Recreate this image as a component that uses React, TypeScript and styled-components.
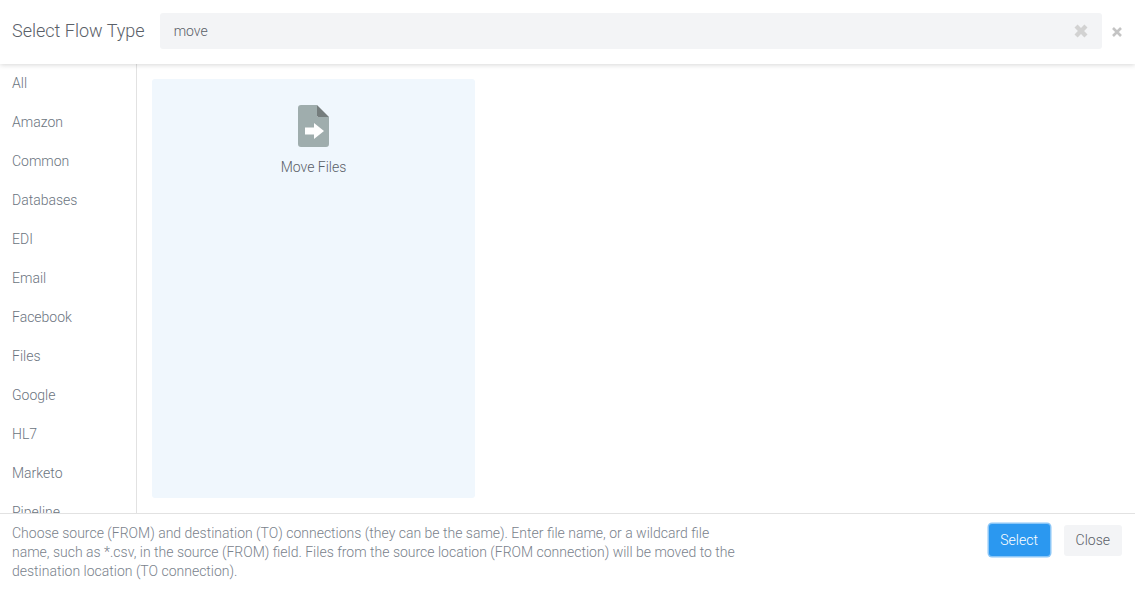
import React from "react";
import styled, { createGlobalStyle } from "styled-components";

const GlobalStyle = createGlobalStyle`
    html, body {
        margin: 0;
        padding: 0;
        background: #fff;
        font-family: Roboto, "Liberation Sans", sans-serif;
        font-weight: 300;
    }
`;

const Modal = styled.div`
    width: 1135px;
    height: 589px;
    display: flex;
    flex-direction: column;
    overflow: hidden;
    background: #fff;
`;

const Header = styled.header`
    height: 64px;
    flex: none;
    display: flex;
    align-items: center;
    padding: 0 13px 2px 12px;
    box-sizing: border-box;
    box-shadow: 0 1px 5px rgba(0, 0, 0, 0.16);
    position: relative;
    z-index: 1;
`;

const Title = styled.h4`
    margin: 0 15px 2px 0;
    font-size: 18px;
    font-weight: 300;
    color: #5a6068;
    white-space: nowrap;
`;

const SearchBox = styled.div`
    flex: 1;
    height: 36px;
    display: flex;
    align-items: center;
    justify-content: space-between;
    padding: 0 14px;
    box-sizing: border-box;
    border-radius: 3px;
    background: #f3f4f6;
`;

const SearchText = styled.span`
    font-size: 14px;
    color: #5a6068;
`;

const ClearIcon = styled.svg`
    width: 14px;
    height: 14px;
    fill: #d2d2d2;
`;

const DismissIcon = styled.svg`
    width: 10px;
    height: 10px;
    margin-left: 10px;
    margin-top: 2px;
    stroke: #c4c4c4;
    stroke-width: 2.6;
`;

const Body = styled.div`
    flex: 1;
    min-height: 0;
    display: flex;
`;

const Sidebar = styled.ul`
    width: 137px;
    flex: none;
    box-sizing: border-box;
    margin: 0;
    padding: 0 0 0 12px;
    list-style: none;
    overflow: hidden;
    border-right: 1px solid #e2e2e2;
`;

const SidebarItem = styled.li`
    height: 39px;
    line-height: 39px;
    font-size: 14px;
    color: #6b7480;
`;

const Content = styled.main`
    flex: 1;
    padding: 15px;
`;

const FlowCard = styled.div`
    width: 323px;
    height: 419px;
    display: flex;
    flex-direction: column;
    align-items: center;
    padding-top: 26px;
    box-sizing: border-box;
    border-radius: 3px;
    background: #f0f7fd;
`;

const FlowName = styled.span`
    margin-top: 12px;
    font-size: 14px;
    color: #5a6068;
`;

const Footer = styled.footer`
    height: 76px;
    flex: none;
    display: flex;
    justify-content: space-between;
    align-items: flex-start;
    box-sizing: border-box;
    padding: 10px 13px 0 12px;
    border-top: 1px solid #e2e2e2;
`;

const Description = styled.p`
    width: 736px;
    margin: 0;
    font-size: 14px;
    line-height: 19px;
    color: #7a828c;
`;

const Actions = styled.div`
    display: flex;
    align-items: center;
    gap: 14px;
`;

const Button = styled.button<{ $primary?: boolean }>`
    height: ${(p) => (p.$primary ? "32px" : "31px")};
    width: ${(p) => (p.$primary ? "61px" : "auto")};
    padding: 0 ${(p) => (p.$primary ? "0" : "12px")};
    font-family: inherit;
    font-size: 14px;
    font-weight: 300;
    border-radius: 3px;
    color: ${(p) => (p.$primary ? "#fff" : "#5a6068")};
    background: ${(p) => (p.$primary ? "#2b98f0" : "#f3f4f6")};
    border: none;
    box-shadow: ${(p) => (p.$primary ? "0 0 0 1.5px #8ac6f7" : "none")};
`;

const categories = [
    "All",
    "Amazon",
    "Common",
    "Databases",
    "EDI",
    "Email",
    "Facebook",
    "Files",
    "Google",
    "HL7",
    "Marketo",
    "Pipeline",
];

const FileMoveIcon = () => (
    <svg width="31" height="42" viewBox="0 0 31 42">
        <path
            fill="#9fadad"
            d="M3 0H19V12H31V39a3 3 0 0 1-3 3H3a3 3 0 0 1-3-3V3a3 3 0 0 1 3-3Z"
        />
        <path fill="#757d7d" d="M19 0 31 12H20.5a1.5 1.5 0 0 1-1.5-1.5Z" />
        <path fill="#fff" d="M7 22.5H16V18L26 26 16 34V29.5H7Z" />
    </svg>
);

const App = () => (
    <Modal>
        <GlobalStyle />
        <Header>
            <Title>Select Flow Type</Title>
            <SearchBox>
                <SearchText>move</SearchText>
                <ClearIcon viewBox="0 0 14 14">
                    <path d="M3.6 0.5 7 3.9 10.4 0.5 13.5 3.6 10.1 7 13.5 10.4 10.4 13.5 7 10.1 3.6 13.5 0.5 10.4 3.9 7 0.5 3.6Z" />
                </ClearIcon>
            </SearchBox>
            <DismissIcon viewBox="0 0 10 10">
                <path d="M1 1 9 9M9 1 1 9" />
            </DismissIcon>
        </Header>
        <Body>
            <Sidebar>
                {categories.map((name) => (
                    <SidebarItem key={name}>{name}</SidebarItem>
                ))}
            </Sidebar>
            <Content>
                <FlowCard>
                    <FileMoveIcon />
                    <FlowName>Move Files</FlowName>
                </FlowCard>
            </Content>
        </Body>
        <Footer>
            <Description>
                Choose source (FROM) and destination (TO) connections (they can be the same). Enter file name, or a wildcard file name, such as *.csv, in the source (FROM) field. Files from the source location (FROM connection) will be moved to the destination location (TO connection).
            </Description>
            <Actions>
                <Button $primary>Select</Button>
                <Button>Close</Button>
            </Actions>
        </Footer>
    </Modal>
);

export default App;
